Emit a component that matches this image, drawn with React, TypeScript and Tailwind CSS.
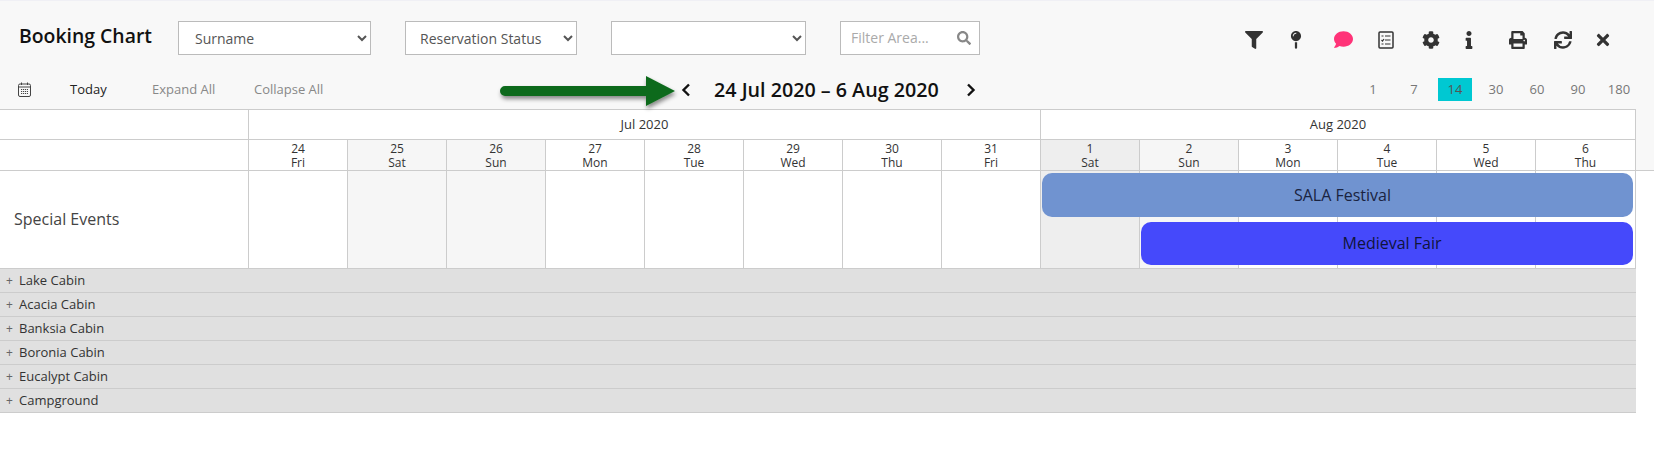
import { FaCog, FaComment, FaFilter, FaInfo, FaMapPin, FaPrint, FaSearch, FaSync, FaTimes } from "react-icons/fa";

const days = [
  { n: 24, d: "Fri" },
  { n: 25, d: "Sat", tone: "bg-[#f6f6f6]" },
  { n: 26, d: "Sun", tone: "bg-[#f6f6f6]" },
  { n: 27, d: "Mon" },
  { n: 28, d: "Tue" },
  { n: 29, d: "Wed" },
  { n: 30, d: "Thu" },
  { n: 31, d: "Fri" },
  { n: 1, d: "Sat", tone: "bg-[#eeeeee]" },
  { n: 2, d: "Sun", tone: "bg-[#f6f6f6]" },
  { n: 3, d: "Mon" },
  { n: 4, d: "Tue" },
  { n: 5, d: "Wed" },
  { n: 6, d: "Thu" },
];

const areas = ["Lake Cabin", "Acacia Cabin", "Banksia Cabin", "Boronia Cabin", "Eucalypt Cabin", "Campground"];
const scales = [1, 7, 14, 30, 60, 90, 180];

function ListIcon() {
  return (
    <svg width="16" height="18" viewBox="0 0 16 18" fill="none" stroke="#333" strokeWidth="1.5">
      <rect x="1" y="1" width="14" height="16" rx="1" />
      <path d="M3.5 5h2M7 5h5.5M3.5 9l1 1 1.5-2M7 9h5.5M3.5 13h2M7 13h5.5" strokeWidth="1.2" />
    </svg>
  );
}

function CalendarIcon() {
  return (
    <svg width="13" height="15" viewBox="0 0 13 15" fill="none" stroke="#444" strokeWidth="1">
      <rect x="0.5" y="2" width="12" height="12.5" rx="1.5" />
      <path d="M0.5 5h12M3.5 0.5v2.5M9.5 0.5v2.5" />
      <path d="M3 7.5h7M3 9.5h7M3 11.5h7" strokeDasharray="1.2 0.8" />
    </svg>
  );
}

function Chevron({ flip }: { flip?: boolean }) {
  return (
    <svg width="10" height="14" viewBox="0 0 10 14" fill="none" stroke="#111" strokeWidth="2.4" className={flip ? "rotate-180" : ""}>
      <path d="M8 1.5 2.5 7 8 12.5" />
    </svg>
  );
}

export default function App() {
  return (
    <div className="relative h-[452px] w-[1654px] overflow-hidden bg-white font-['Open_Sans',sans-serif] text-[#333]">
      <div className="h-[109px] border-t border-[#f0f0f5] bg-[#f8f8f8]">
        <div className="flex h-[69px] items-start pt-5">
          <h1 className="ml-[19px] w-[159px] text-[19.4px] leading-[30px] font-semibold text-[#111]">Booking Chart</h1>
          <select className="h-[34px] w-[193px] border border-[#bbb] bg-white pl-[12px] text-sm text-[#555]">
            <option>Surname</option>
          </select>
          <select className="ml-[34px] h-[34px] w-[172px] border border-[#bbb] bg-white pl-[10px] text-sm text-[#555]">
            <option>Reservation Status</option>
          </select>
          <select className="ml-[34px] h-[34px] w-[195px] border border-[#bbb] bg-white text-sm text-[#555]">
            <option></option>
          </select>
          <div className="ml-[34px] flex h-[34px] w-[140px] items-center border border-[#bbb] bg-white pr-[8px] pl-[10px]">
            <input placeholder="Filter Area..." className="w-full min-w-0 text-sm outline-none placeholder:text-[#aaa]" />
            <FaSearch className="shrink-0 text-[#888]" size={14} />
          </div>
          <div className="ml-[265px] flex items-center pt-[9px] text-[#333]">
            <FaFilter size={18} />
            <FaMapPin size={18} className="ml-[24px]" />
            <FaComment size={19} className="ml-[29px] text-[#ff3378]" />
            <span className="ml-[25px]"><ListIcon /></span>
            <FaCog size={18} className="ml-[28px]" />
            <FaInfo size={18} className="ml-[20px]" />
            <FaPrint size={18} className="ml-[31px]" />
            <FaSync size={18} className="ml-[27px]" />
            <FaTimes size={18} className="ml-[22px]" />
          </div>
        </div>
        <div className="flex h-[39px] items-center text-[13px]">
          <span className="ml-[18px] w-[52px]"><CalendarIcon /></span>
          <span className="w-[82px] text-[#222]">Today</span>
          <span className="w-[102px] text-[#888]">Expand All</span>
          <span className="w-[427px] text-[#888]">Collapse All</span>
          <Chevron />
          <span className="ml-[23px] w-[252px] text-[19.7px] font-semibold whitespace-nowrap text-[#111]">24 Jul 2020 – 6 Aug 2020</span>
          <Chevron flip />
          <div className="ml-[380px] flex gap-[7px] text-[#777]">
            {scales.map((s) => (
              <span
                key={s}
                className={s === 14 ? "flex h-[23px] w-[34px] items-center justify-center bg-[#00c8d2] text-[#555]" : "flex h-[23px] w-[34px] items-center justify-center"}
              >
                {s}
              </span>
            ))}
          </div>
        </div>
      </div>

      {/* chart sits under the header rule, day columns share the same grid */}
      <div className="bg-[#f8f8f8]">
        <div className="w-[1636px] border-t border-[#ccc]">
          <div className="grid h-[30px] grid-cols-[249px_repeat(13,99px)_1fr] bg-white text-[13px]">
            <div className="border-r border-b border-[#ccc]" />
            <div className="col-span-8 flex items-center justify-center border-r border-b border-[#ccc]">Jul 2020</div>
            <div className="col-span-6 flex items-center justify-center border-r border-b border-[#ccc]">Aug 2020</div>
          </div>
          <div className="grid h-[30px] grid-cols-[249px_repeat(13,99px)_1fr] bg-white text-xs leading-[14px]">
            <div className="border-r border-[#ccc]" />
            {days.map((day) => (
              <div key={`${day.n}${day.d}`} className={`flex flex-col items-center justify-center border-r border-[#ccc] pt-px ${day.tone ?? ""}`}>
                <span>{day.n}</span>
                <span>{day.d}</span>
              </div>
            ))}
          </div>
        </div>
      </div>
      <div className="h-px w-[1654px] bg-[#ccc]" />
      <div className="grid h-[97px] w-[1636px] grid-cols-[249px_repeat(13,99px)_1fr] grid-rows-[1fr_1fr] bg-white">
        <div className="col-start-1 row-span-2 row-start-1 flex items-center border-r border-[#ccc] pb-[2px] pl-[14px] text-base text-[#444]">Special Events</div>
        {days.map((day, i) => (
          <div
            key={`${day.n}${day.d}`}
            style={{ gridColumnStart: i + 2 }}
            className={`row-span-2 row-start-1 border-r border-[#ccc] ${day.tone ?? ""}`}
          />
        ))}
        <div className="z-10 col-start-10 col-end-16 row-start-1 mt-[2px] mr-[3px] mb-[3px] ml-[1px] flex items-center justify-center rounded-[10px] bg-[#7093d0] pl-[10px] text-base text-[#1a2340]">
          SALA Festival
        </div>
        <div className="z-10 col-start-11 col-end-16 row-start-2 mt-[2px] mr-[3px] mb-[3px] ml-[1px] flex items-center justify-center rounded-[10px] bg-[#4549fb] pl-[10px] text-base text-[#10143c]">
          Medieval Fair
        </div>
      </div>
      <div className="w-[1636px] border-t border-[#ccc]">
        {areas.map((area) => (
          <div key={area} className="flex h-6 items-center border-b border-[#ccc] bg-[#e0e0e0] text-[13px] text-[#333]">
            <span className="w-[19px] pl-[6px] text-xs text-[#666]">+</span>
            {area}
          </div>
        ))}
      </div>

      <svg className="absolute top-[72px] left-[496px]" width="190" height="44" viewBox="0 0 190 44">
        <defs>
          <filter id="arrowShadow" x="-10%" y="-30%" width="120%" height="170%">
            <feDropShadow dx="1" dy="3" stdDeviation="2" floodColor="#000" floodOpacity="0.45" />
          </filter>
        </defs>
        <path d="M9 14h141V4l29 15-29 15V24H9a5 5 0 0 1 0-10z" fill="#0f6b1e" filter="url(#arrowShadow)" />
      </svg>
    </div>
  );
}
